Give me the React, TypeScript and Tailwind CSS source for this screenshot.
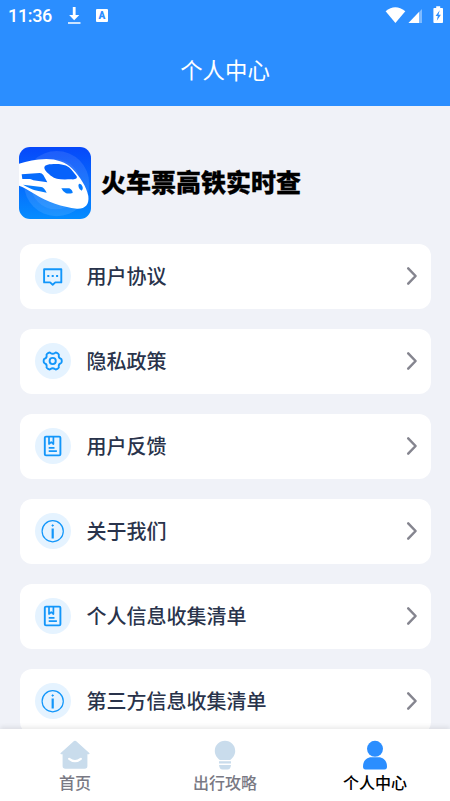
import React from "react";

type IconName = "message" | "gear" | "book" | "info";

const rows: { label: string; icon: IconName }[] = [
  { label: "用户协议", icon: "message" },
  { label: "隐私政策", icon: "gear" },
  { label: "用户反馈", icon: "book" },
  { label: "关于我们", icon: "info" },
  { label: "个人信息收集清单", icon: "book" },
  { label: "第三方信息收集清单", icon: "info" },
];

function RowIcon({ name }: { name: IconName }) {
  return (
    <svg viewBox="0 0 36 36" className="size-9 shrink-0 rounded-full bg-[#e5f3ff]" fill="none" stroke="#1296fa" strokeWidth="1.9" strokeLinejoin="round">
      {name === "message" && (
        <>
          <path d="M9.100 11.200h17.200v13.200h-6L17.700 26.700l-2.600-2.300h-6z" />
          <path d="M12.300 18h2m2.400 0h2m2.400 0h2" strokeWidth="2" />
        </>
      )}
      {name === "gear" && (
        <>
          <path d="M13.500 9.900q1-.8 2 .1q2.200 1.700 4.400 0q1-.9 2-.1l1.300.8q1 .7.600 1.900q-.3 2.300 1.800 3q1 .4 1.100 1.400v2q-.1 1-1.100 1.400q-2.100.7-1.800 3q.4 1.200-.6 1.900l-1.300.8q-1 .8-2-.1q-2.200-1.700-4.400 0q-1 .9-2 .1l-1.300-.8q-1-.7-.6-1.900q.3-2.300-1.800-3q-1-.4-1.100-1.400v-2q.1-1 1.100-1.400q2.100-.7 1.800-3q-.4-1.200.6-1.900z" />
          <circle cx="17.700" cy="18" r="3.100" />
        </>
      )}
      {name === "book" && (
        <>
          <rect x="9.800" y="8.600" width="15.600" height="18.800" rx="1.200" />
          <path d="M14 9v7l2.200-1.800 2.200 1.800V9" strokeWidth="1.700" />
          <path d="M13.700 19.800h5.800M13.700 23.100h8.200" strokeWidth="1.700" />
        </>
      )}
      {name === "info" && (
        <>
          <circle cx="17.700" cy="18.200" r="10.600" strokeWidth="1.200" />
          <path d="M17.700 15.400v10" strokeWidth="2.200" />
          <circle cx="17.700" cy="12.500" r=".7" fill="#1296fa" strokeWidth="1" />
        </>
      )}
    </svg>
  );
}

function TrainLogo() {
  return (
    <svg viewBox="0 0 216 216" className="size-[72px] shrink-0 rounded-[11px]">
      <defs>
        <linearGradient id="sky" x1="0" y1="0" x2="0" y2="1">
          <stop offset="0" stopColor="#0648fa" />
          <stop offset="1" stopColor="#058cff" />
        </linearGradient>
      </defs>
      <path d="M0 0h216v216H0z" fill="url(#sky)" />
      <circle cx="113" cy="110" r="98" fill="#fff" opacity=".1" />
      <circle cx="110" cy="112" r="75" fill="#fff" opacity=".08" />
      <path d="M0 50C24 43 50 37 82 36C112 36 142 46 160 65C185 92 202 118 208 147C211 173 199 186 174 185C130 181 84 165 48 142C29 129 12 120 0 116z" fill="#fff" />
      <path d="M76 62C76 53 91 51 111 51C135 51 150 58 158 69L173 88C176 95 170 98 157 97C128 98 108 98 98 88C89 80 76 71 76 62z" fill="#0662fb" />
      <path d="M8 82L62 78Q69 78 73 84L85 106L43 100Q38 97 33 96H10z" fill="#066bfc" />
      <path d="M12 113L67 120Q76 122 83 137L48 130Q35 126 12 113z" fill="#067bfd" />
      <path d="M127 124H151Q161 129 161 138Q150 141 141 139Q132 135 127 124z" fill="#067bfd" />
      <path d="M180 110Q188 110 191 120Q193 129 188 131Q181 129 179 121Q177 113 180 110z" fill="#067bfd" />
    </svg>
  );
}

function StatusBar() {
  return (
    <div className="flex h-8 items-center pl-2 text-white">
      <span className="w-[59px] font-['Roboto','Noto_Sans',sans-serif] text-[18px] font-medium leading-8 tracking-[-0.35px]">11:36</span>
      <svg viewBox="0 0 14 18" className="-mt-px h-[18px] w-3.5" fill="currentColor">
        <path d="M5.800 0h2.800v8h3.700L7.200 13.200 2.100 8h3.700zM1 15.200h12.500v1.600H1z" />
      </svg>
      <div className="ml-[15px] -mt-0.5 flex h-[13px] w-3 items-center justify-center rounded-[1px] bg-white font-['Roboto',sans-serif] text-[10px] font-black text-[#2b8eff]">A</div>
      <svg viewBox="0 0 65 20" className="ml-auto h-5 w-[65px]" fill="currentColor">
        <path d="M.6 5.200Q10.200-2.900 20.300 5.200L10.400 17z" />
        <path d="M37 3v14H23.500z" opacity=".4" />
        <path d="M34 6v11H23.500z" />
        <g transform="translate(-1.300 0)">
          <path d="M50.500 2h2V.3h4V2h2q.8 0 .8.8V16q0 1-.8 1h-8q-.8 0-.8-1V2.800q0-.8.8-.8z" />
          <path d="M56 4.300L51.900 10h2.200l-1 4.800 4.100-6h-2.400z" fill="#2b8eff" />
        </g>
      </svg>
    </div>
  );
}

function NavIcon({ name }: { name: "home" | "bulb" | "person" }) {
  return (
    <svg viewBox="0 0 30 30" className="h-[30px] w-[30px]">
      {name === "home" && (
        <>
          <path d="M14 1.100q1-.9 2 0l13.300 12q.7.9-.5 1.200h-1.400V26q0 2.800-2.800 2.800H5.400Q2.600 28.800 2.600 26V14.300H1.200Q0 14 .7 13.100z" fill="#c9dcec" />
          <path d="M9.200 18.800q5.800 4.800 11.600 0" fill="none" stroke="white" strokeWidth="2.200" strokeLinecap="round" />
        </>
      )}
      {name === "bulb" && (
        <path d="M15 .8C9.200.8 4.800 5.200 4.800 10.900C4.800 15.100 7.100 17.700 9.800 20H20.200C22.900 17.700 25.200 15.100 25.200 10.900C25.200 5.200 20.800.8 15 .8zM9 21.200h12v2.200H9zm0 3.700h12q-.5 4.500-3.500 4.500h-5Q9.500 29.400 9 24.900z" fill="#c9dcec" />
      )}
      {name === "person" && (
        <g fill="#2b8eff">
          <circle cx="15" cy="8.800" r="8" />
          <path d="M3 26.500C3 20.500 7 17.300 11.500 17.300h7C23 17.300 27 20.500 27 26.500Q27 29.500 24.500 29.500h-19Q3 29.500 3 26.500z" />
        </g>
      )}
    </svg>
  );
}

export default function App() {
  return (
    <div className="flex h-[801px] w-[450px] flex-col overflow-hidden bg-[#f0f2f8] font-['Noto_Sans_CJK_SC',sans-serif]">
      <header className="h-[106px] shrink-0 bg-[#2b8eff]">
        <StatusBar />
        <h1 className="pt-[21px] text-center text-[22.4px] font-normal leading-8 text-white">个人中心</h1>
      </header>
      <main className="min-h-0 flex-1 overflow-hidden pl-5 pr-[19px] pt-[41px]">
        <div className="-ml-px mb-6 flex h-[72px] items-center">
          <TrainLogo />
          <h2 className="-mt-1 ml-[10px] whitespace-nowrap text-[25px] font-black leading-9 text-black [-webkit-text-stroke:0.3px_black]">火车票高铁实时查</h2>
        </div>
        <div className="flex flex-col gap-[20.1px] pt-[0.5px]">
          {rows.map((row) => (
            <div key={row.label} className="flex h-[65px] shrink-0 items-center rounded-xl bg-white pl-[14.5px] pr-[13px]">
              <RowIcon name={row.icon} />
              <span className="ml-4 text-[20px] font-medium leading-7 text-[#29334b]">{row.label}</span>
              <svg viewBox="0 0 12 20" className="ml-auto h-5 w-3" fill="none" stroke="#85858f" strokeWidth="2.500" strokeLinecap="round" strokeLinejoin="round">
                <path d="M2.200 2.400L9.600 10l-7.400 7.600" />
              </svg>
            </div>
          ))}
        </div>
      </main>
      <nav className="z-10 grid h-[72px] shrink-0 grid-cols-3 bg-white shadow-[0_-2px_5px_rgba(0,0,0,0.09)]">
        {([
          { label: "首页", icon: "home" },
          { label: "出行攻略", icon: "bulb" },
          { label: "个人中心", icon: "person" },
        ] as const).map((tab) => (
          <div key={tab.icon} className="flex flex-col items-center pt-[11px]">
            <NavIcon name={tab.icon} />
            <span className={tab.icon === "person" ? "text-[16px] font-medium leading-6 text-black" : "text-[16px] font-medium leading-6 text-[#797984]"}>{tab.label}</span>
          </div>
        ))}
      </nav>
    </div>
  );
}
